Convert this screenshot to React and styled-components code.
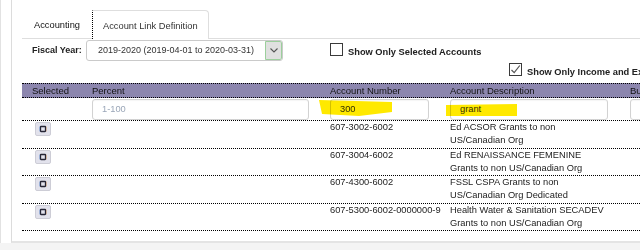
import React from 'react';
import styled, { createGlobalStyle } from 'styled-components';

const GlobalStyle = createGlobalStyle`
  html, body {
    margin: 0;
    padding: 0;
    background: #f4f4f4;
    overflow: hidden;
  }
  body {
    font-family: "Liberation Sans", Arial, sans-serif;
    color: #222;
  }
`;

const Page = styled.div`
  width: 640px;
  height: 250px;
  overflow: hidden;
`;

const Shell = styled.div`
  width: 900px;
  height: 243px;
  box-sizing: border-box;
  border-left: 1px solid #e2e2e2;
  background: #fff;
  padding-left: 10px;
`;

const Panel = styled.div`
  height: 100%;
  box-sizing: border-box;
  border-left: 1px solid #dcdcdc;
  border-bottom: 2px solid #e4e4e4;
  padding-left: 10px;
`;

const TabBar = styled.div`
  display: flex;
  align-items: flex-end;
  height: 38px;
  border-bottom: 1px solid #dedede;
`;

const Tab = styled.div`
  box-sizing: border-box;
  height: ${({ active }) => (active ? '29px' : '28px')};
  margin-bottom: ${({ active }) => (active ? '-1px' : '0')};
  padding: ${({ active }) => (active ? '2px 10px 0' : '2px 12px 0')};
  display: flex;
  align-items: center;
  font-size: 9.3px;
  color: ${({ active }) => (active ? '#333' : '#111')};
  background: #fff;
  border: ${({ active }) => (active ? '1px solid #dedede' : '0')};
  border-left: ${({ active }) => (active ? '1px dotted #000' : '0')};
  border-bottom: 0;
  border-top-right-radius: 4px;
`;

const FiscalRow = styled.div`
  display: flex;
  align-items: flex-start;
  margin-top: 1px;
  padding-left: 10px;
  height: 22px;
`;

const FieldLabel = styled.span`
  font-size: 9px;
  font-weight: bold;
  line-height: 21px;
  width: 54px;
  color: #222;
`;

const Select = styled.div`
  display: flex;
  width: 197px;
  height: 21px;
  box-sizing: border-box;
  border: 1px solid #cacaca;
  border-radius: 3px;
  background: #fff;
  overflow: hidden;
`;

const SelectText = styled.span`
  flex: 1;
  padding-left: 11px;
  font-size: 9px;
  line-height: 19px;
  color: #333;
  white-space: nowrap;
`;

const SelectButton = styled.span`
  width: 17px;
  box-sizing: border-box;
  display: flex;
  align-items: center;
  justify-content: center;
  background: #e0e0e0;
  border: 1px solid #9ccf9c;
  border-radius: 0 2px 2px 0;
`;

const CheckItem = styled.label`
  display: inline-flex;
  align-self: flex-start;
  align-items: flex-end;
  gap: 5px;
  margin-left: ${({ offset }) => offset}px;
  margin-top: ${({ top }) => top}px;
  font-size: 9.3px;
  font-weight: bold;
  color: #222;
  white-space: nowrap;
  line-height: 11px;
`;

const CheckText = styled.span`
  margin-bottom: -2px;
`;

const Box = styled.span`
  width: 13px;
  height: 13px;
  box-sizing: border-box;
  border: 1px solid #3a3a3a;
  background: #fff;
  display: flex;
  align-items: center;
  justify-content: center;
`;

const IncomeRow = styled.div`
  height: 21px;
  display: flex;
  align-items: flex-start;
`;

const Grid = styled.div`
  width: 860px;
`;

const Row = styled.div`
  display: grid;
  grid-template-columns: 66px 238px 120px 180px 1fr;
  border-bottom: 1px dotted #000;
  ${({ head }) => head && `
    border-top: 1px dotted #000;
    background: #8c86ae;
    height: 13px;
    font-size: 9.5px;
    line-height: 13px;
    color: #111;
  `}
  ${({ filter }) => filter && `
    height: 23px;
    padding-top: 1px;
    box-sizing: border-box;
  `}
  ${({ data }) => data && `
    font-size: 9.3px;
    line-height: 13.3px;
    min-height: 26.6px;
    color: #222;
  `}
`;

const Cell = styled.div`
  padding-left: ${({ pad }) => (pad !== undefined ? pad : 4)}px;
  position: relative;
  white-space: nowrap;
  ${({ wrap }) => wrap && `white-space: normal; padding-right: 20px;`}
`;

const Input = styled.div`
  box-sizing: border-box;
  width: ${({ w }) => w}px;
  height: 21px;
  border: 1px solid #d2d2d2;
  border-radius: 3px;
  box-shadow: inset 0 1px 1px rgba(0, 0, 0, 0.04);
  padding-left: 9px;
  font-size: 9.3px;
  line-height: 19px;
  color: ${({ placeholder }) => (placeholder ? '#9aa6b8' : '#333')};
  background: #fff;
`;

const Marker = styled.svg`
  position: absolute;
  left: ${({ x }) => x}px;
  top: ${({ y }) => y}px;
  mix-blend-mode: multiply;
  pointer-events: none;
`;

const PickButton = styled.span`
  display: flex;
  align-items: center;
  justify-content: center;
  width: 16px;
  height: 14px;
  box-sizing: border-box;
  margin: 1px 0 0 13px;
  background: #e2e2ec;
  border: 1px solid #cdcdd6;
  border-radius: 2px;
`;

const accounts = [
  { number: '607-3002-6002', desc: 'Ed ACSOR Grants to non US/Canadian Org' },
  { number: '607-3004-6002', desc: 'Ed RENAISSANCE FEMENINE Grants to non US/Canadian Org' },
  { number: '607-4300-6002', desc: 'FSSL CSPA Grants to non US/Canadian Org Dedicated' },
  { number: '607-5300-6002-0000000-9', desc: 'Health Water & Sanitation SECADEV Grants to non US/Canadian Org' },
];

function PickIcon() {
  return (
    <svg width="8" height="8" viewBox="0 0 8 8">
      <rect x="1.5" y="1.5" width="5" height="5" rx="0.5" fill="none" stroke="#262636" strokeWidth="1.3" />
      <line x1="0.7" y1="1.5" x2="0.7" y2="6.5" stroke="#4a86e0" strokeWidth="0.6" opacity="0.7" />
      <line x1="7.3" y1="1.5" x2="7.3" y2="6.5" stroke="#d98a3b" strokeWidth="0.6" opacity="0.7" />
    </svg>
  );
}

export default function App() {
  return (
    <Page>
      <GlobalStyle />
      <Shell>
        <Panel>
          <TabBar>
            <Tab>Accounting</Tab>
            <Tab active>Account Link Definition</Tab>
          </TabBar>

          <FiscalRow>
            <FieldLabel>Fiscal Year:</FieldLabel>
            <Select>
              <SelectText>2019-2020 (2019-04-01 to 2020-03-31)</SelectText>
              <SelectButton>
                <svg width="8" height="5" viewBox="0 0 8 5">
                  <path d="M0.5 0.5 L4 4 L7.5 0.5" fill="none" stroke="#555" strokeWidth="1.1" />
                </svg>
              </SelectButton>
            </Select>
            <CheckItem offset={47} top={3}>
              <Box />
              <CheckText>Show Only Selected Accounts</CheckText>
            </CheckItem>
          </FiscalRow>

          <IncomeRow>
            <CheckItem offset={487} top={1}>
              <Box>
                <svg width="11" height="11" viewBox="0 0 11 11">
                  <path d="M1.5 6 L4.2 8.7 L9.8 1.5" fill="none" stroke="#555" strokeWidth="1.2" />
                </svg>
              </Box>
              <CheckText>Show Only Income and Expense Accounts</CheckText>
            </CheckItem>
          </IncomeRow>

          <Grid>
            <Row head>
              <Cell pad={10}>Selected</Cell>
              <Cell>Percent</Cell>
              <Cell>Account Number</Cell>
              <Cell>Account Description</Cell>
              <Cell>Budget</Cell>
            </Row>
            <Row filter>
              <Cell />
              <Cell>
                <Input w={217} placeholder="1">1-100</Input>
              </Cell>
              <Cell>
                <Input w={99}>300</Input>
                <Marker x={-7} y={0} width="74" height="17" viewBox="0 0 74 17">
                  <path d="M0 1 L73 3 L73 13 L40 17 L3 15 Z" fill="#ffe900" />
                </Marker>
              </Cell>
              <Cell>
                <Input w={158}>grant</Input>
                <Marker x={0} y={5} width="72" height="12" viewBox="0 0 72 12">
                  <path d="M0 1 L71 0 L71 12 L0 12 Z" fill="#ffe900" />
                </Marker>
              </Cell>
              <Cell>
                <Input w={120} />
              </Cell>
            </Row>
            {accounts.map(acc => (
              <Row data key={acc.number}>
                <Cell pad={0}>
                  <PickButton>
                    <PickIcon />
                  </PickButton>
                </Cell>
                <Cell />
                <Cell>{acc.number}</Cell>
                <Cell wrap>{acc.desc}</Cell>
                <Cell />
              </Row>
            ))}
          </Grid>
        </Panel>
      </Shell>
    </Page>
  );
}
